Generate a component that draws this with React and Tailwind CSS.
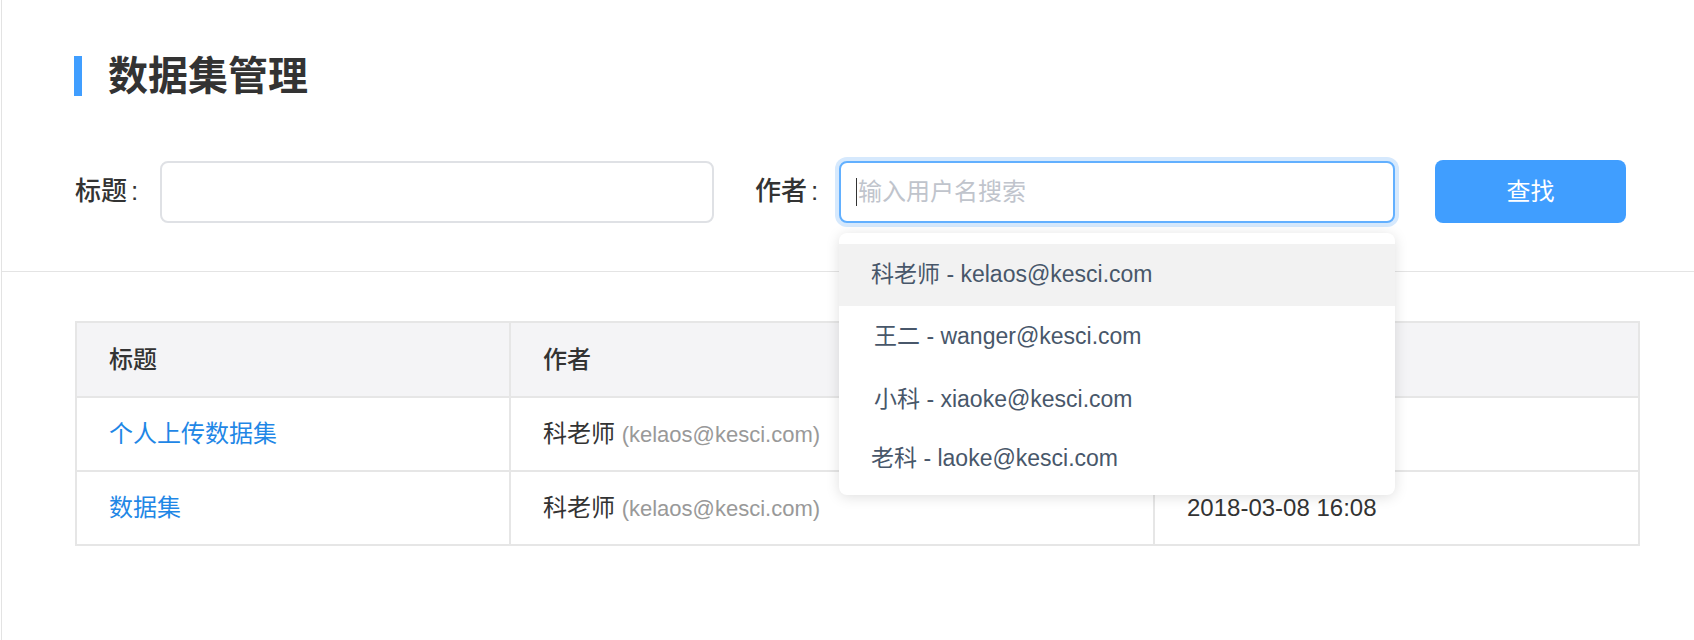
import React from 'react';

const suggestions = [
  { name: '科老师', email: 'kelaos@kesci.com', h: 'h-[62px] bg-[#f2f2f2] pl-[32px]' },
  { name: '王二', email: 'wanger@kesci.com', h: 'h-[62px] pl-[35px]' },
  { name: '小科', email: 'xiaoke@kesci.com', h: 'h-[64px] pl-[35px]' },
  { name: '老科', email: 'laoke@kesci.com', h: 'h-[54px] pl-[32px]' },
];

const rows = [
  { title: '个人上传数据集', author: '科老师', email: 'kelaos@kesci.com', time: '2018-03-08 16:10' },
  { title: '数据集', author: '科老师', email: 'kelaos@kesci.com', time: '2018-03-08 16:08' },
];

export default function App() {
  return (
    <div className="min-h-[640px] w-[1694px] bg-white font-['Liberation_Sans','Noto_Sans_CJK_SC',sans-serif] text-[#333]">
      <div className="ml-px min-h-[640px] border-l border-[#e3e3e3]">
        {/* Header + filters */}
        <div className="h-[272px] border-b border-[#e4e4e4] pt-[56px]">
          <div className="flex h-[40px] items-center pl-[72px]">
            <span className="h-[40px] w-[8px] bg-[#409eff]" />
            <h1 className="ml-[26px] text-[40px] leading-[40px] font-semibold text-[#333]">数据集管理</h1>
          </div>

          <div className="mt-[64px] flex h-[63px] items-center pl-[73px]">
            <label className="w-[85px] text-[26px] font-medium text-[#333]">
              标题<span className="ml-[4px]">:</span>
            </label>
            <input
              type="text"
              readOnly
              className="h-[62px] w-[554px] rounded-[8px] border-2 border-[#dfe1e5] bg-white px-[16px] text-[24px] outline-none"
            />

            <label className="ml-[41px] w-[84px] text-[26px] font-medium text-[#333]">
              作者<span className="ml-[4px]">:</span>
            </label>
            <div className="relative">
              <input
                type="text"
                readOnly
                placeholder="输入用户名搜索"
                className="h-[62px] w-[556px] rounded-[8px] border-2 border-[#62b0ff] bg-white pl-[17px] text-[24px] outline-none ring-[4px] ring-[#d6e9fd] placeholder:text-[#c0c4cc]"
              />
              <span className="absolute left-[17px] top-[17px] h-[28px] w-px bg-[#333]" />

              {/* Autocomplete dropdown */}
              <ul className="absolute left-0 top-[72px] z-10 w-[556px] rounded-[8px] bg-white pt-[11px] pb-[9px] shadow-[0_2px_14px_rgba(0,0,0,0.13)]">
                {suggestions.map((s) => (
                  <li key={s.email} className={`flex items-center text-[23px] text-[#48576a] ${s.h}`}>
                    {s.name} - {s.email}
                  </li>
                ))}
              </ul>
            </div>

            <button className="ml-[40px] h-[63px] w-[191px] rounded-[8px] bg-[#409eff] text-[24px] text-white">查找</button>
          </div>
        </div>

        {/* Table */}
        <div className="ml-[73px] mt-[49px] w-[1565px]">
          <table className="w-full border-collapse border-2 border-[#e6e6e6] text-left text-[24px]">
            <thead>
              <tr className="h-[75px] bg-[#f4f4f6]">
                <th className="w-[434px] border-2 border-[#e6e6e6] pl-[32px] font-medium text-[#333]">标题</th>
                <th className="w-[644px] border-2 border-[#e6e6e6] pl-[32px] font-medium text-[#333]">作者</th>
                <th className="border-2 border-[#e6e6e6] pl-[32px] font-medium text-[#333]">创建时间</th>
              </tr>
            </thead>
            <tbody>
              {rows.map((r) => (
                <tr key={r.title} className="h-[74px]">
                  <td className="border-2 border-[#e6e6e6] pl-[32px] text-[#1f87e6]">{r.title}</td>
                  <td className="border-2 border-[#e6e6e6] pl-[32px]">
                    <span className="text-[#333]">{r.author}</span>{' '}
                    <span className="text-[22px] text-[#999]">({r.email})</span>
                  </td>
                  <td className="border-2 border-[#e6e6e6] pl-[32px] text-[#333]">{r.time}</td>
                </tr>
              ))}
            </tbody>
          </table>
        </div>
      </div>
    </div>
  );
}
